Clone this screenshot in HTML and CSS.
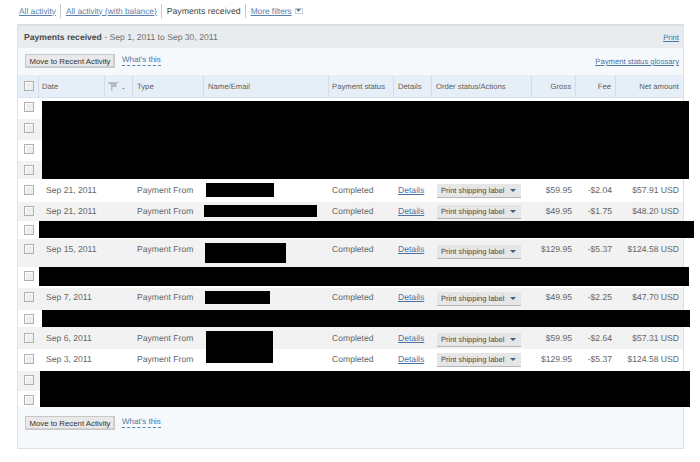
FILE: index.html
```html
<!DOCTYPE html>
<html lang="en">
<head>
<meta charset="utf-8">
<title>Payments received</title>
<link rel="stylesheet" href="styles.css">
</head>
<body>
<nav class="tabs">
  <a href="#">All activity</a><span class="sep"></span>
  <a href="#">All activity (with balance)</a><span class="sep"></span>
  <span class="current">Payments received</span><span class="sep"></span>
  <a href="#">More filters</a>
  <span class="filter-toggle"><svg width="5" height="3" viewBox="0 0 5 3"><path d="M0 0h5L2.500 3z" fill="#5b7da0"/></svg></span>
</nav>
<main class="panel">
  <header class="panel-title">
    <p><b>Payments received</b> - Sep 1, 2011 to Sep 30, 2011</p>
    <a href="#">Print</a>
  </header>
  <div class="toolbar">
    <button class="btn">Move to Recent Activity</button>
    <a class="help" href="#">What's this</a>
    <a class="glossary" href="#">Payment status glossary</a>
  </div>
  <div class="row head">
    <div class="c-check"><span class="box"></span></div>
    <div class="c-date">Date</div>
    <div class="c-flag">
      <svg width="17" height="9" viewBox="0 0 17 9"><path d="M0 0h11L8 2.500l1 2.500H4.500V9H3V3L0 1z" fill="#b4bcc2"/><path d="M14 6h3l-1.500 1.500z" fill="#8b949b"/></svg>
    </div>
    <div class="c-type">Type</div>
    <div class="c-name">Name/Email</div>
    <div class="c-status">Payment status</div>
    <div class="c-details">Details</div>
    <div class="c-order">Order status/Actions</div>
    <div class="c-gross">Gross</div>
    <div class="c-fee">Fee</div>
    <div class="c-net">Net amount</div>
  </div>

  <div class="row blank r21"><div class="c-check"><span class="box"></span></div></div>
  <div class="row blank alt r21"><div class="c-check"><span class="box"></span></div></div>
  <div class="row blank r21"><div class="c-check"><span class="box"></span></div></div>
  <div class="row blank alt r18"><div class="c-check"><span class="box"></span></div><i class="redact bar-a"></i></div>

  <div class="row data h23 nudge-a">
    <div class="c-check"><span class="box"></span></div>
    <div class="c-date">Sep 21, 2011</div><div class="c-flag"></div>
    <div class="c-type">Payment From</div>
    <div class="c-name"><i class="redact n1"></i></div>
    <div class="c-status">Completed</div>
    <div class="c-details"><a href="#">Details</a></div>
    <div class="c-order"><span class="select">Print shipping label<em></em></span></div>
    <div class="c-gross">$59.95</div><div class="c-fee">-$2.04</div><div class="c-net">$57.91 USD</div>
  </div>
  <div class="row data alt h19 nudge-b">
    <div class="c-check"><span class="box"></span></div>
    <div class="c-date">Sep 21, 2011</div><div class="c-flag"></div>
    <div class="c-type">Payment From</div>
    <div class="c-name"><i class="redact n2"></i></div>
    <div class="c-status">Completed</div>
    <div class="c-details"><a href="#">Details</a></div>
    <div class="c-order"><span class="select">Print shipping label<em></em></span></div>
    <div class="c-gross">$49.95</div><div class="c-fee">-$1.75</div><div class="c-net">$48.20 USD</div>
  </div>
  <div class="row blank r18"><div class="c-check"><span class="box"></span></div><i class="redact bar-b"></i></div>
  <div class="row data alt h28">
    <div class="c-check"><span class="box"></span></div>
    <div class="c-date">Sep 15, 2011</div><div class="c-flag"></div>
    <div class="c-type">Payment From</div>
    <div class="c-name"><i class="redact n3"></i></div>
    <div class="c-status">Completed</div>
    <div class="c-details"><a href="#">Details</a></div>
    <div class="c-order"><span class="select">Print shipping label<em></em></span></div>
    <div class="c-gross">$129.95</div><div class="c-fee">-$5.37</div><div class="c-net">$124.58 USD</div>
  </div>
  <div class="row blank r21"><div class="c-check"><span class="box"></span></div><i class="redact bar-c"></i></div>
  <div class="row data alt h22 nudge-c">
    <div class="c-check"><span class="box"></span></div>
    <div class="c-date">Sep 7, 2011</div><div class="c-flag"></div>
    <div class="c-type">Payment From</div>
    <div class="c-name"><i class="redact n4"></i></div>
    <div class="c-status">Completed</div>
    <div class="c-details"><a href="#">Details</a></div>
    <div class="c-order"><span class="select">Print shipping label<em></em></span></div>
    <div class="c-gross">$49.95</div><div class="c-fee">-$2.25</div><div class="c-net">$47.70 USD</div>
  </div>
  <div class="row blank r17"><div class="c-check"><span class="box"></span></div><i class="redact bar-d"></i></div>
  <div class="row data alt h22 nudge-d">
    <div class="c-check"><span class="box"></span></div>
    <div class="c-date">Sep 6, 2011</div><div class="c-flag"></div>
    <div class="c-type">Payment From</div>
    <div class="c-name"><i class="redact n5"></i></div>
    <div class="c-status">Completed</div>
    <div class="c-details"><a href="#">Details</a></div>
    <div class="c-order"><span class="select">Print shipping label<em></em></span></div>
    <div class="c-gross">$59.95</div><div class="c-fee">-$2.64</div><div class="c-net">$57.31 USD</div>
  </div>
  <div class="row data h22 nudge-e">
    <div class="c-check"><span class="box"></span></div>
    <div class="c-date">Sep 3, 2011</div><div class="c-flag"></div>
    <div class="c-type">Payment From</div>
    <div class="c-name"></div>
    <div class="c-status">Completed</div>
    <div class="c-details"><a href="#">Details</a></div>
    <div class="c-order"><span class="select">Print shipping label<em></em></span></div>
    <div class="c-gross">$129.95</div><div class="c-fee">-$5.37</div><div class="c-net">$124.58 USD</div>
  </div>
  <div class="row blank alt r20"><div class="c-check"><span class="box"></span></div><i class="redact bar-e"></i></div>
  <div class="row blank r16"><div class="c-check"><span class="box"></span></div></div>

  <footer class="toolbar foot">
    <button class="btn">Move to Recent Activity</button>
    <a class="help" href="#">What's this</a>
  </footer>
</main>
</body>
</html>
```
FILE: styles.css
```css
* { box-sizing: border-box; }
html, body { margin: 0; height: 462px; overflow: hidden; background: #fff; }
body { font-family: "Liberation Sans", Arial, sans-serif; font-size: 8.6px; color: #666; text-rendering: geometricPrecision; }
a { color: #4a74a5; }

.tabs { display: flex; align-items: center; height: 24px; padding: 0 0 3px 19px; font-size: 8.3px; }
.tabs a { color: #5a80ad; }
.tabs .current { color: #444; font-size: 8.7px; }
.sep { width: 1px; height: 14px; background: #c4c9cc; margin: 0 5px 0 4px; }
.filter-toggle { display: flex; align-items: center; justify-content: center; width: 8px; height: 6px; margin-left: 3px; border: 1px solid #c5ced6; }

.panel { position: relative; width: 667px; height: 425px; margin-left: 17px; border: 1px solid #dfe2e4; border-top: 2px solid #dcdfe0; background: #f6f9fc; }

.panel-title { display: flex; justify-content: space-between; align-items: center; height: 22px; padding: 0 4px 0 6px; background: #e8ecef; }
.panel-title p { margin: 0; font-size: 8.6px; color: #707070; }
.panel-title b { color: #4a4a4a; }
.panel-title a { font-size: 7.7px; }

.toolbar { display: flex; align-items: flex-start; height: 27px; padding: 6px 4px 0 7px; background: #f6f9fc; }
.btn { height: 14px; width: 90px; padding: 0; border: 1px solid #c8c8c8; background: #e9e9e9; box-shadow: inset -1px -1px 0 #d0d0d0; font: 7.8px "Liberation Sans", Arial, sans-serif; color: #333; }
.help { margin-left: 7px; font-size: 8px; line-height: 11px; text-decoration: none; border-bottom: 1px dashed #5a80a8; }
.glossary { margin: 2px 0 0 auto; font-size: 7.7px; line-height: 11px; }
.foot { height: 41px; padding-top: 9px; }

.row { position: relative; display: grid; grid-template-columns: 21px 66px 28px 71px 125px 65px 38px 100px 44px 40px 66px; align-items: center; background: #fff; }
.row > div { padding-left: 3px; white-space: nowrap; }
.row > .c-check { padding: 0 0 0 6px; }
.row > .c-gross, .row > .c-fee { padding: 0 4px 0 0; text-align: right; }
.row > .c-net { padding: 0 3px 0 0; text-align: right; }

.head { height: 23px; background: #e6eff7; font-size: 7.7px; color: #5c5c5c; border-bottom: 1px solid #dde3e8; }
.head > div { display: flex; align-items: center; height: 22px; border-right: 1px solid #d3dde6; }
.head > .c-type, .head > .c-name, .head > .c-details, .head > .c-order { padding-left: 4px; }
.head .c-gross, .head .c-fee, .head .c-net { justify-content: flex-end; }
.head .c-net { border-right: 0; }
.head .c-flag { padding-left: 3px; }

.box { display: block; width: 10px; height: 10px; border: 1px solid #b0b0b0; background: #eee; box-shadow: inset 1px 1px 0 #fff; }
.blank { align-items: start; padding-top: 4px; }

.data > .c-date { padding-left: 7px; }
.data > .c-type { padding-left: 4px; }
.data > .c-details { padding-left: 4px; }
.data > .c-order { padding-left: 5px; }
.alt { background: #f2f2f2; }
.h23 { height: 23px; }
.h19 { height: 19px; }
.h22 { height: 22px; }
.h28 { height: 28px; align-items: start; padding-top: 5px; }
.r16 { height: 16px; }
.r17 { height: 17px; }
.r18 { height: 18px; }
.r20 { height: 20px; }
.r21 { height: 21px; }

.select { display: flex; align-items: center; justify-content: space-between; width: 84px; height: 14px; margin-top: 1px; padding: 0 5px 0 4px; border-bottom: 1px solid #b5b5b5; background: #e6e6e6; font-size: 7.5px; color: #4a4a4a; }
.select em { width: 0; height: 0; border: 3px solid transparent; border-top: 3px solid #3f5f80; border-bottom: 0; }

.nudge-a { padding-bottom: 1px; }
.nudge-a .select { margin-top: 1px; }
.nudge-b { padding-bottom: 2px; }
.nudge-b .select { margin-top: 3px; }
.nudge-c { padding-bottom: 4px; }
.nudge-c .select { margin-top: 4px; }
.nudge-d { padding-bottom: 1px; }
.nudge-d .select { margin-top: 4px; }
.nudge-e { padding-bottom: 3px; }
.nudge-e .select { margin-top: 3px; }

.redact { position: absolute; display: block; background: #000; z-index: 1; }
.bar-a { left: 24px; right: -6px; bottom: 0; height: 78px; }
.bar-b { left: 21px; right: -11px; top: 0; height: 17px; }
.bar-c { left: 21px; right: -6px; top: 0; height: 19px; }
.bar-d { left: 24px; right: -7px; top: 0; height: 17px; }
.bar-e { left: 22px; right: -7px; top: 0; height: 36px; }
.n1 { left: 188px; top: 4px; width: 68px; height: 14px; }
.n2 { left: 186px; top: 3px; width: 113px; height: 12px; }
.n3 { left: 187px; top: 4px; width: 81px; height: 20px; }
.n4 { left: 187px; top: 3px; width: 65px; height: 13px; }
.n5 { left: 188px; top: 4px; width: 67px; height: 32px; }
```
